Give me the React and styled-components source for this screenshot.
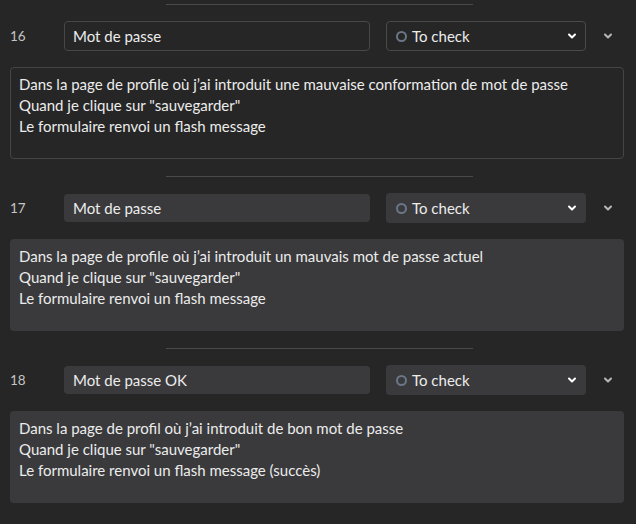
import React from 'react';
import styled, { createGlobalStyle } from 'styled-components';

const GlobalStyle = createGlobalStyle`
  html, body {
    margin: 0;
    background: #262626;
  }
  body {
    font-family: Lato, "Open Sans", sans-serif;
    color: #ececec;
  }
`;

const cases = [
  {
    id: 16,
    title: 'Mot de passe',
    focused: true,
    lines: [
      "Dans la page de profile où j’ai introduit une mauvaise conformation de mot de passe",
      'Quand je clique sur "sauvegarder"',
      'Le formulaire renvoi un flash message',
    ],
  },
  {
    id: 17,
    title: 'Mot de passe',
    lines: [
      "Dans la page de profile où j’ai introduit un mauvais mot de passe actuel",
      'Quand je clique sur "sauvegarder"',
      'Le formulaire renvoi un flash message',
    ],
  },
  {
    id: 18,
    title: 'Mot de passe OK',
    lines: [
      "Dans la page de profil où j’ai introduit de bon mot de passe",
      'Quand je clique sur "sauvegarder"',
      'Le formulaire renvoi un flash message (succès)',
    ],
  },
];

const Chevron = ({ color = '#fff', size = 10 }) => (
  <svg width={size} height={size} viewBox="0 0 10 10" fill="none">
    <path
      d="M2 3.5 L5 6.5 L8 3.5"
      stroke={color}
      strokeWidth="2"
      strokeLinecap="round"
      strokeLinejoin="round"
    />
  </svg>
);

const App = () => (
  <>
    <GlobalStyle />
    <Page>
      {cases.map((c) => (
        <Case key={c.id}>
          <Divider />
          <Header>
            <Num>{c.id}</Num>
            <TitleInput $focused={c.focused}>{c.title}</TitleInput>
            <Select $focused={c.focused}>
              <Status>
                <Dot />
                To check
              </Status>
              <Chevron />
            </Select>
            <Toggle>
              <Chevron color="#b8b8b8" />
            </Toggle>
          </Header>
          <Body $focused={c.focused}>
            {c.lines.map((l, i) => (
              <div key={i}>{l}</div>
            ))}
          </Body>
        </Case>
      ))}
    </Page>
  </>
);

const Page = styled.div`
  padding: 4px 12px 0 10px;
`;

const Case = styled.section`
  display: flex;
  flex-direction: column;
  padding-bottom: 17px;
`;

const Divider = styled.div`
  align-self: center;
  width: 307px;
  height: 1px;
  background: #4a4a4a;
  margin-left: 4px;
`;

const Header = styled.div`
  display: flex;
  align-items: center;
  margin-top: 16px;
  height: 30px;
`;

const Num = styled.span`
  width: 54px;
  font-size: 13.5px;
  color: #c4c4c4;
`;

const TitleInput = styled.div`
  box-sizing: border-box;
  width: 306px;
  height: ${(p) => (p.$focused ? '30px' : '28px')};
  display: flex;
  align-items: center;
  padding: 0 8px;
  border-radius: 4px;
  font-size: 15px;
  border: 1px solid ${(p) => (p.$focused ? '#474747' : 'transparent')};
  background: ${(p) => (p.$focused ? '#262626' : '#3a3a3c')};
`;

const Select = styled.div`
  box-sizing: border-box;
  margin-left: 16px;
  width: 200px;
  height: 30px;
  display: flex;
  align-items: center;
  justify-content: space-between;
  padding: 0 8px 0 9px;
  border-radius: 4px;
  border: 1px solid ${(p) => (p.$focused ? '#4a4a4a' : 'transparent')};
  background: ${(p) => (p.$focused ? '#262626' : '#3a3a3c')};
`;

const Status = styled.span`
  display: flex;
  align-items: center;
  gap: 5px;
  font-size: 15px;
`;

const Dot = styled.span`
  box-sizing: border-box;
  width: 11px;
  height: 11px;
  border-radius: 50%;
  border: 2px solid #6b7686;
`;

const Toggle = styled.span`
  display: flex;
  margin-left: 17px;
`;

const Body = styled.div`
  box-sizing: border-box;
  margin-top: 16px;
  min-height: 92px;
  padding: 6px 8px 8px;
  border-radius: 4px;
  font-size: 15px;
  line-height: 21px;
  border: 1px solid ${(p) => (p.$focused ? '#454545' : 'transparent')};
  background: ${(p) => (p.$focused ? '#262626' : '#3a3a3c')};
`;

export default App;
